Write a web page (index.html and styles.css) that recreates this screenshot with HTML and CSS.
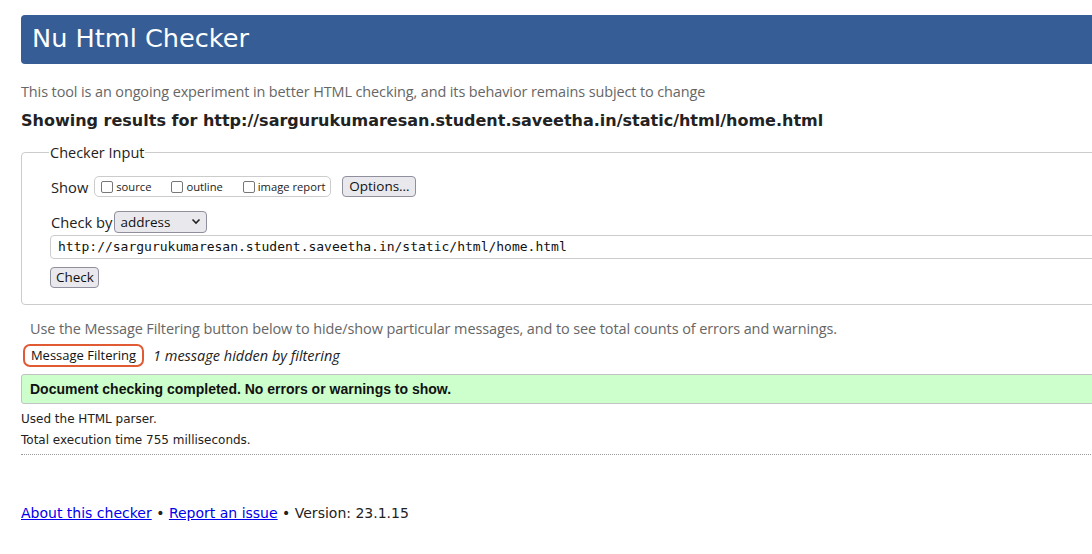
FILE: index.html
```html
<!DOCTYPE html>
<html>
<head>
<meta charset="utf-8">
<title>Nu Html Checker</title>
<link rel="stylesheet" href="styles.css">
</head>
<body>
<div class="page">
  <h1 class="banner">Nu Html Checker</h1>
  <p class="intro">This tool is an ongoing experiment in better HTML checking, and its behavior remains subject to change</p>
  <p class="results">Showing results for http://sargurukumaresan.student.saveetha.in/static/html/home.html</p>
  <fieldset class="input">
    <legend>Checker Input</legend>
    <div class="show-row">
      <span class="lbl">Show</span>
      <span class="group">
        <label class="opt"><span class="box"></span>source</label>
        <label class="opt"><span class="box"></span>outline</label>
        <label class="opt"><span class="box"></span>image report</label>
      </span>
      <button class="btn">Options…</button>
    </div>
    <div class="by-row">
      <span class="lbl">Check by</span>
      <span class="select">address<svg width="10" height="7" viewBox="0 0 10 7"><path d="M1.5 1.5 L5 5 L8.5 1.5" fill="none" stroke="#222" stroke-width="1.6"/></svg></span>
    </div>
    <div class="url">http://sargurukumaresan.student.saveetha.in/static/html/home.html</div>
    <button class="btn check">Check</button>
  </fieldset>
  <p class="filter-note">Use the Message Filtering button below to hide/show particular messages, and to see total counts of errors and warnings.</p>
  <div class="filter-row">
    <button class="filter-btn">Message Filtering</button>
    <em class="hidden-note">1 message hidden by filtering</em>
  </div>
  <div class="success">Document checking completed. No errors or warnings to show.</div>
  <p class="stat">Used the HTML parser.</p>
  <p class="stat">Total execution time 755 milliseconds.</p>
  <hr class="dots">
  <p class="footer"><a href="#">About this checker</a> • <a href="#">Report an issue</a> • Version: 23.1.15</p>
</div>
</body>
</html>
```
FILE: styles.css
```css
html { overflow: hidden; }
body { margin: 0; background: #fff; color: #222; font-family: "DejaVu Sans", sans-serif; }
.page { width: 1120px; padding: 15px 0 0 21px; }
.banner {
  margin: 0; height: 49px; box-sizing: border-box;
  background: #365d95; color: #fff; border-radius: 4px;
  font-weight: normal; font-size: 25.6px; line-height: 47px; padding-left: 11px;
}
.intro { margin: 18px 0 0; font-family: "Open Sans", sans-serif; font-size: 14.45px; color: #666; line-height: 20px; letter-spacing: -0.1px; }
.results { margin: 8px 0 0; font-weight: bold; font-size: 16px; line-height: 22px; color: #222; }
.input {
  margin: 11px 0 0; border: 1px solid #ccc; border-radius: 4px;
  padding: 0 0 15px 29px; height: 162px; box-sizing: border-box;
}
.input legend { font-family: "Open Sans", sans-serif; font-size: 14.5px; color: #222; padding: 0 1px; margin-left: -2px; }
.lbl { font-family: "Open Sans", sans-serif; font-size: 14.7px; color: #222; }
.show-row { display: flex; align-items: center; height: 21px; margin-top: 14px; }
.group {
  display: flex; align-items: center; gap: 0; margin-left: 6px;
  border: 1px solid #ccc; border-radius: 5px; height: 21px; box-sizing: border-box; padding: 0 5px 0 6px;
}
.opt { display: flex; align-items: center; font-family: "Open Sans", sans-serif; font-size: 11.2px; color: #222; margin-right: 20px; }
.opt:last-child { margin-right: 0; }
.box { width: 12px; height: 12px; border: 1.5px solid #777; border-radius: 2px; box-sizing: border-box; margin-right: 3px; }
.btn {
  font-family: "Open Sans", sans-serif; font-size: 13.5px; color: #111;
  background: #e9e9ed; border: 1px solid #8f8f9d; border-radius: 4px; height: 21px; padding: 0 5px; line-height: 19px;
}
.show-row .btn { margin-left: 11px; width: 74px; }
.by-row { display: flex; align-items: center; margin-top: 14px; height: 21px; }
.select {
  display: flex; align-items: center; justify-content: space-between; box-sizing: border-box;
  margin-left: 2px; width: 93px; height: 22px; padding: 0 5px 0 5px;
  background: #e9e9ed; border: 1px solid #8f8f9d; border-radius: 4px;
  font-family: "Open Sans", sans-serif; font-size: 13.5px; color: #111;
}
.url {
  margin-top: 3px; margin-left: -1px; height: 24px; box-sizing: border-box;
  border: 1px solid #ccc; border-radius: 4px; padding-left: 7px;
  font-family: "DejaVu Sans Mono", monospace; font-size: 13px; line-height: 22px; color: #111;
}
.check { margin-top: 8px; margin-left: -1px; width: 49px; display: block; }
.filter-note { margin: 15px 0 0 9px; font-family: "Open Sans", sans-serif; font-size: 14.47px; color: #666; line-height: 18px; letter-spacing: -0.1px; }
.filter-row { display: flex; align-items: center; margin-top: 6px; margin-left: 2px; height: 23px; }
.filter-btn {
  font-family: "Open Sans", sans-serif; font-size: 13px; color: #111; background: #fff;
  border: 2px solid #e05a33; border-radius: 7px; height: 23px; width: 121px; padding: 0; line-height: 19px;
}
.hidden-note { margin-left: 9px; font-family: "Open Sans", sans-serif; font-size: 14.5px; color: #222; }
.success {
  margin-top: 7px; height: 30px; box-sizing: border-box; background: #ccffcc;
  border: 1px solid #c2c2c2; border-radius: 3px; padding-left: 8px;
  font-family: "Liberation Sans", Arial, sans-serif; font-weight: bold; font-size: 14px; line-height: 28px; color: #111;
}
.stat { margin: 0; font-size: 12px; color: #222; line-height: 21px; }
.success + .stat { margin-top: 5px; }
.dots { margin: 3px 0 0; border: 0; border-top: 1px dotted #999; height: 0; }
.footer { margin: 50px 0 0; font-size: 14px; color: #222; }
.footer a { color: #0000ee; }
```
